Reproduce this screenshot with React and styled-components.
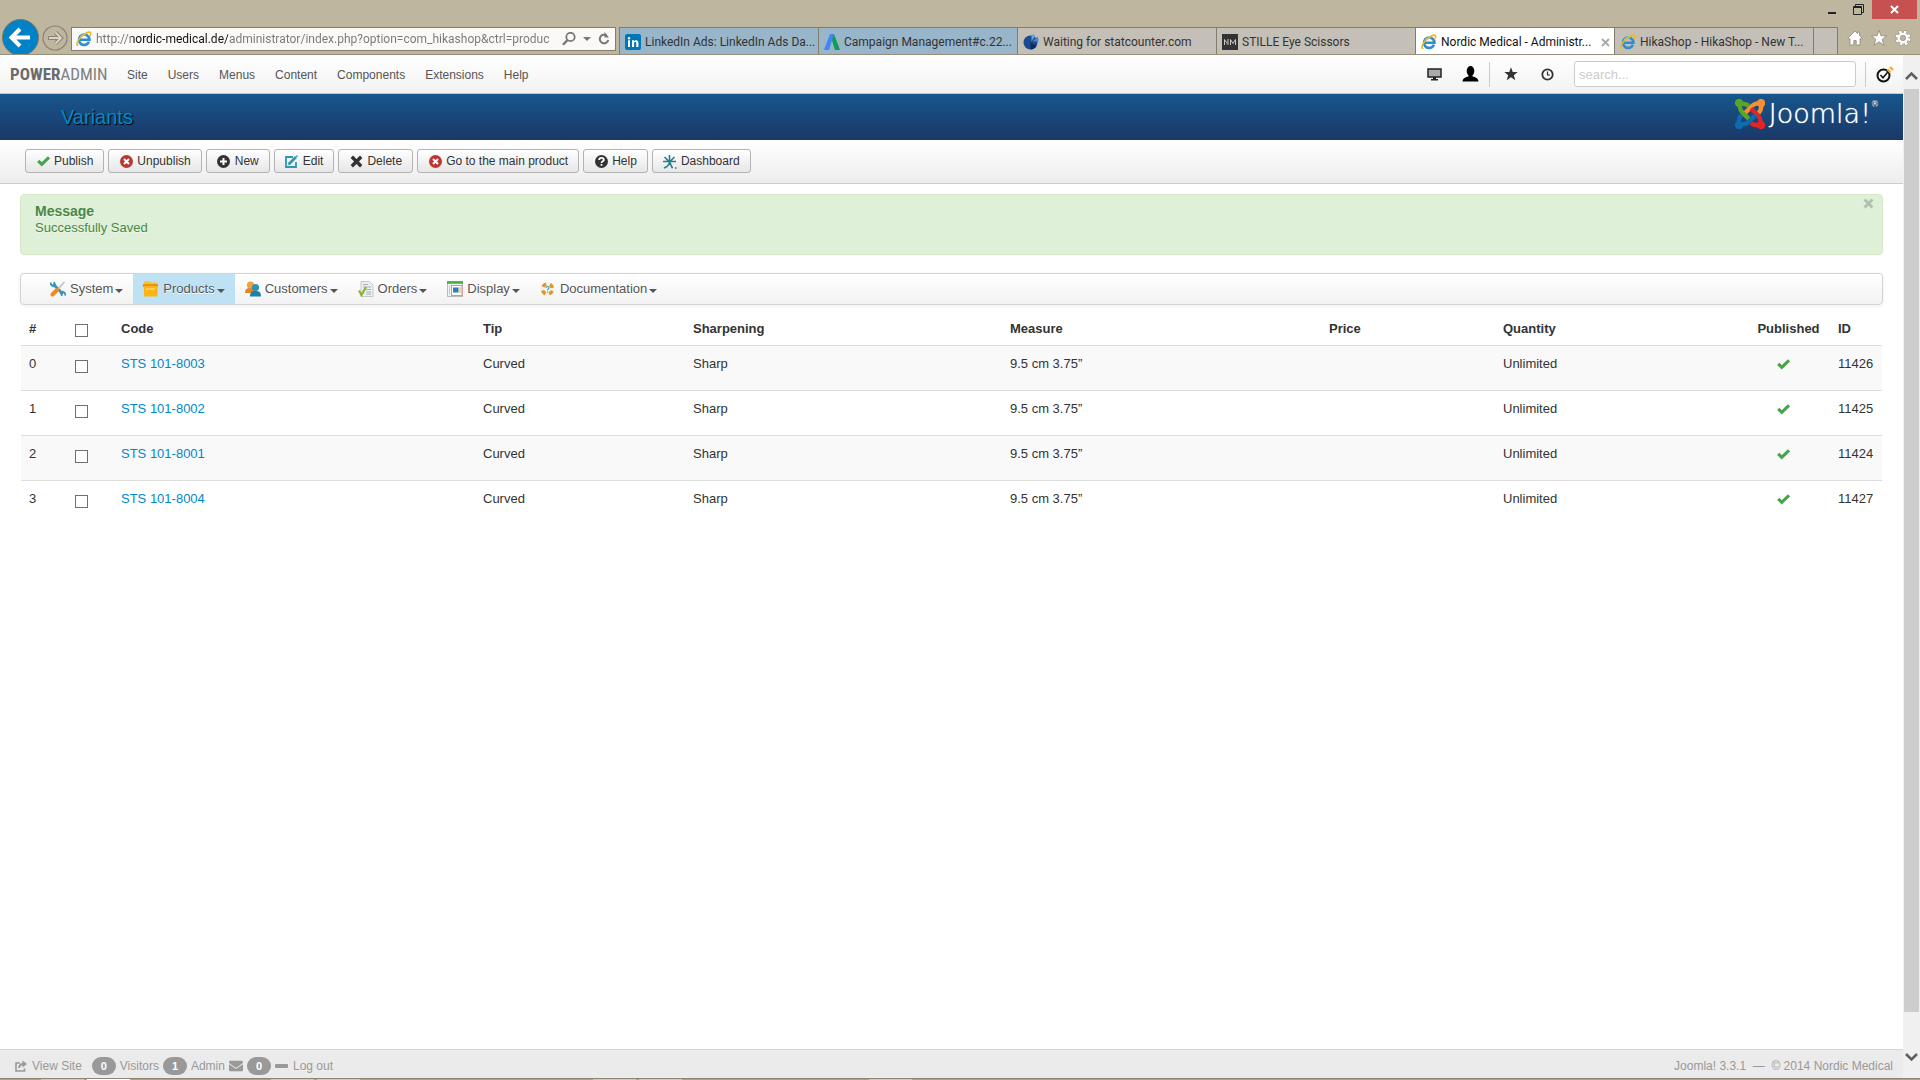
import { FaEnvelope } from "react-icons/fa";
import styled, { createGlobalStyle } from "styled-components";

const GlobalStyle = createGlobalStyle`
  * {
    box-sizing: border-box;
  }

  body {
    margin: 0;
    background: #ffffff;
    color: #333333;
    font-family: "Liberation Sans", Arial, sans-serif;
    font-size: 13px;
    line-height: 18px;
  }

  a {
    color: inherit;
    text-decoration: none;
  }

  button {
    font-family: inherit;
    cursor: pointer;
  }

  svg {
    display: block;
    flex: none;
  }
`

const Screen = styled.div`
  display: flex;
  flex-direction: column;
  min-height: 100vh;
`

/* ---------- browser window ---------- */

const Chrome = styled.header`
  background: #bfb6a0;
  border-bottom: 1px solid #988f7a;
  font-family: Roboto, "Open Sans", sans-serif;
  font-size: 12px;
`

const WindowControls = styled.div`
  display: flex;
  justify-content: flex-end;
  height: 19px;
  padding-right: 3px;
`

const WindowButton = styled.button`
  display: flex;
  align-items: center;
  justify-content: center;
  width: ${(p) => (p.$close ? "45px" : "27px")};
  padding: 0;
  border: 0;
  background: ${(p) => (p.$close ? "#c75050" : "transparent")};
`

const NavRow = styled.div`
  display: flex;
  align-items: flex-end;
  height: 35px;
  padding-left: 2px;
  overflow: hidden;
`

const BackButton = styled.button`
  align-self: flex-start;
  width: 37px;
  height: 37px;
  padding: 0;
  border: 0;
  background: transparent;
`

const ForwardButton = styled.button`
  width: 26px;
  height: 26px;
  margin: 0 3px 3px;
  padding: 0;
  border: 0;
  background: transparent;
`

const AddressBar = styled.label`
  display: flex;
  align-items: center;
  gap: 4px;
  flex: 0 1 545px;
  height: 24px;
  margin-bottom: 3px;
  padding: 0 5px 0 4px;
  border: 1px solid #857d6b;
  background: #faf9f7;
`

/* the host part of the address is darker than the rest */
const AddressInput = styled.input`
  flex: 1;
  min-width: 0;
  height: 20px;
  padding: 0;
  border: 0;
  outline: 0;
  font: inherit;
  color: transparent;
  background: linear-gradient(90deg, #777777 35px, #111111 35px, #111111 132px, #777777 132px);
  background-clip: text;
`

const TabStrip = styled.nav`
  display: flex;
  flex: 1;
  min-width: 0;
  height: 27px;
  margin-left: 3px;
  border-left: 1px solid #857d6b;
`

const tabColors = {
  blue: "#98b5c9",
  plain: "#c4c0b8",
  active: "#ffffff",
}

const Tab = styled.a`
  display: flex;
  align-items: center;
  flex: 0 1 199px;
  min-width: 0;
  gap: 4px;
  padding: 2px 4px 0 5px;
  border-top: 1px solid #857d6b;
  border-right: 1px solid #857d6b;
  background: ${(p) => tabColors[p.$kind]};
  color: ${(p) => (p.$kind === "active" ? "#111111" : "#333333")};
`

const TabTitle = styled.span`
  flex: 1;
  min-width: 0;
  white-space: nowrap;
`

const NewTab = styled.button`
  width: 24px;
  padding: 0;
  border: solid #857d6b;
  border-width: 1px 1px 0 0;
  background: ${tabColors.plain};
`

const BrowserTools = styled.div`
  display: flex;
  align-items: center;
  gap: 8px;
  height: 33px;
  padding: 0 9px 0 8px;
`

const ToolButton = styled.button`
  padding: 0;
  border: 0;
  background: transparent;
`

const Viewport = styled.div`
  display: flex;
  flex: 1;
`

const Page = styled.div`
  display: flex;
  flex-direction: column;
  flex: 1;
  min-width: 0;
`

const ScrollTrack = styled.div`
  display: flex;
  flex-direction: column;
  width: 17px;
  background: #f0f0f0;
`

const ScrollArrow = styled.button`
  display: flex;
  justify-content: center;
  align-items: flex-end;
  height: ${(p) => (p.$down ? "66px" : "34px")};
  padding: ${(p) => (p.$down ? "0 0 16px" : "0 0 8px")};
  border: 0;
  background: transparent;
`

const ScrollThumb = styled.div`
  flex: 1;
  margin: 0 1px;
  background: #cdcdcd;
`

/* ---------- admin header ---------- */

const TopBar = styled.div`
  display: flex;
  align-items: center;
  height: 39px;
  padding-left: 10px;
  border-bottom: 1px solid #c8c8c8;
  background: linear-gradient(#ffffff, #f2f2f2);
  font-size: 12px;
`

const Brand = styled.a`
  width: 97px;
  margin-right: 10px;
  color: #808080;
  font-family: "Liberation Sans Narrow", "Roboto Condensed", "Liberation Sans", sans-serif;
  font-size: 17px;

  strong {
    color: #6b6b6b;
  }
`

const TopMenu = styled.nav`
  display: flex;
  flex: 1;

  a {
    padding: 1px 10px 0;
    color: #555555;
  }
`

const TopActions = styled.div`
  display: flex;
  align-items: center;
`

const IconLink = styled.a`
  display: flex;
  align-items: center;
  justify-content: center;
  width: 36px;
  height: 26px;
`

const Separator = styled.span`
  width: 1px;
  height: 25px;
  margin: ${(p) => (p.$tight ? "0 3px 0 1px" : "0 1px 0 9px")};
  background: #cccccc;
`

const SearchInput = styled.input`
  width: 282px;
  height: 26px;
  margin-left: 9px;
  padding: 0 4px;
  border: 1px solid #cccccc;
  border-radius: 3px;
  font: inherit;
  font-size: 13px;
  outline: 0;

  &::placeholder {
    color: #cccccc;
  }
`

const Banner = styled.div`
  display: flex;
  align-items: center;
  justify-content: space-between;
  height: 46px;
  padding: 0 24px 0 61px;
  background: linear-gradient(#17568c, #1a3867);
`

const PageTitle = styled.h1`
  margin: 0;
  color: #0088cc;
  font-size: 20px;
  font-weight: normal;
  text-shadow: 1px 1px 1px #000000;
`

const Logo = styled.a`
  display: flex;
  align-items: center;
  gap: 4px;
  height: 46px;
  padding-bottom: 6px;
  color: #ffffff;
  font-family: "DejaVu Sans", sans-serif;
  font-size: 27px;
  font-weight: 200;
  text-shadow: 0 0 1px #ffffff;

  sup {
    align-self: flex-start;
    font-size: 8px;
    line-height: 22px;
    margin-left: -4px;
  }
`

const Toolbar = styled.div`
  display: flex;
  align-items: flex-start;
  gap: 4px;
  height: 44px;
  padding: 9px 25px 0;
  border-bottom: 1px solid #cccccc;
  background: linear-gradient(#ffffff, #ededed);
`

const ToolbarButton = styled.button`
  display: flex;
  align-items: center;
  gap: 4px;
  height: 24px;
  padding: 0 10px;
  border: 1px solid #b3b3b3;
  border-radius: 3px;
  background: linear-gradient(#ffffff, #e6e6e6);
  color: #333333;
  font-size: 12px;
  white-space: nowrap;
`

const ButtonIcon = styled.span`
  display: flex;
  justify-content: center;
  width: 14px;
  color: ${(p) => p.$color};
`

/* ---------- content ---------- */

const Content = styled.main`
  flex: 1;
  padding: 10px 20px;
`

const Alert = styled.section`
  display: flex;
  justify-content: space-between;
  align-items: flex-start;
  margin-bottom: 18px;
  padding: 8px 8px 17px 14px;
  border: 1px solid #d6e9c6;
  border-radius: 4px;
  background: #dff0d8;
  color: #468847;
  text-shadow: 0 1px 0 rgba(255, 255, 255, 0.5);

  h4 {
    margin: 0;
    font-size: 14px;
    line-height: 16px;
  }

  p {
    margin: 0;
  }
`

const AlertClose = styled.button`
  margin-top: -5px;
  padding: 0;
  border: 0;
  background: transparent;
  color: #b2c0ad;
`

const ShopMenu = styled.nav`
  display: flex;
  height: 32px;
  margin-bottom: 6px;
  padding: 0 19px;
  border: 1px solid #d4d4d4;
  border-radius: 4px;
  background: linear-gradient(#ffffff, #f2f2f2);
  box-shadow: 0 1px 4px rgba(0, 0, 0, 0.07);
`

const ShopMenuItem = styled.a`
  display: flex;
  align-items: center;
  gap: 4px;
  padding: 0 10px;
  background: ${(p) => (p.$active ? "#bfe1f4" : "transparent")};
  color: #555555;
  text-shadow: 0 1px 0 #ffffff;
`

const Caret = styled.span`
  margin: 3px 0 0 -2px;
  border: 4px solid transparent;
  border-top-color: #555555;
  border-bottom-width: 0;
`

const Check = styled.input`
  display: block;
  appearance: none;
  width: 13px;
  height: 13px;
  margin: 5px 0 0;
  border: 1px solid #707070;
  background: #ffffff;

  &:checked {
    background: #0088cc;
  }
`

const VariantTable = styled.table`
  width: calc(100% - 2px);
  margin-left: 1px;
  border-collapse: collapse;
  table-layout: fixed;

  th,
  td {
    padding: 9px 8px 7px;
    text-align: left;
    vertical-align: top;
  }

  th {
    height: 34px;
  }

  th ${Check} {
    margin-top: 4px;
  }

  td {
    height: 45px;
    border-top: 1px solid #dddddd;
  }

  th:nth-child(9) {
    text-align: center;
  }

  tbody tr:nth-child(odd) {
    background: #f9f9f9;
  }

  td a {
    color: #0088cc;
  }
`

const Col = styled.col`
  width: ${(p) => p.$width}px;
`

const PublishedMark = styled.button`
  display: block;
  margin: 3px auto 0;
  padding: 0 10px 0 0;
  border: 0;
  background: transparent;
  color: #46a546;
`

/* ---------- status bar ---------- */

const StatusBar = styled.footer`
  display: flex;
  justify-content: space-between;
  align-items: center;
  height: 29px;
  padding: 4px 10px 0 15px;
  border-top: 1px solid #d4d4d4;
  background: #ebebeb;
  color: #999999;
  font-size: 12px;
`

const StatusGroup = styled.div`
  display: flex;
  align-items: center;
  gap: 4px;

  a {
    display: flex;
    align-items: center;
    gap: 5px;
  }

  a:first-child {
    margin-right: 6px;
  }
`

const Badge = styled.span`
  width: 24px;
  border-radius: 9px;
  background: #999999;
  color: #ffffff;
  font-size: 11px;
  font-weight: bold;
  text-align: center;
`

const Taskbar = styled.div`
  display: flex;
  gap: 3px;
  height: 2px;
  padding-left: 41px;
  border-top: 1px solid #8d8674;
  background: #a9a28d;
`

const TaskButton = styled.span`
  width: 43px;
  margin-right: ${(p) => p.$space || 0}px;
  background: ${(p) => (p.$active ? "#ffffff" : "#cfcabd")};
`

/* ---------- drawings ---------- */

const IeIcon = () => (
  <svg width="16" height="16" viewBox="0 0 16 16" fill="none">
    <path d="M13 10.8A5.2 5.2 0 1 1 13.4 8.7H4" stroke="#2d8fd0" strokeWidth="2.6" />
    <path d="M4 6.6a4.6 4.6 0 0 1 6-2.6" stroke="#8fd3f5" strokeWidth="1.2" />
    <path
      d="M2.3 13.9C.6 15.3.2 12.6 2.6 8.9 5.4 4.6 11.6.2 14 1.3c1.1.5.8 2-.1 3.6"
      stroke="#f0b71e"
      strokeWidth="1.6"
    />
  </svg>
)

const LinkedInIcon = () => (
  <svg width="16" height="16" viewBox="0 0 16 16">
    <rect width="16" height="16" rx="2" fill="#0077b5" />
    <path d="M3 6.3h2V13H3zM7 6.3h2v1c.8-1.6 4.4-1.7 4.4 1.4V13h-2.1V9.3c0-1.9-2.2-1.7-2.2 0V13H7z" fill="#ffffff" />
    <circle cx="4" cy="4.2" r="1.2" fill="#ffffff" />
  </svg>
)

const AdwordsIcon = () => (
  <svg width="16" height="16" viewBox="0 0 16 16">
    <path d="M6 0h4l6 16h-5z" fill="#0f9d58" />
    <path d="M6 0h4L5 16H0z" fill="#4285f4" />
  </svg>
)

const StatIcon = () => (
  <svg width="16" height="16" viewBox="0 0 16 16">
    <circle cx="7.5" cy="8.5" r="7" fill="#1b4a92" />
    <path d="M7.5 8.5L13.5 12A7 7 0 0 1 7.5 15.5z" fill="#0f2c5e" />
    <path d="M8.5 7.5V.5a6 6 0 0 1 4 1z" fill="#6f9fd6" />
    <path d="M9.5 7.5l5-5a7 7 0 0 1 1 5z" fill="#4d86cb" />
  </svg>
)

const NmIcon = () => (
  <svg width="16" height="16" viewBox="0 0 16 16">
    <rect width="16" height="16" fill="#333333" />
    <path d="M2.5 11V5.5l3.5 5V5M8.5 11V5.5l2.5 4 2.5-4V11" fill="none" stroke="#c8c8c8" />
  </svg>
)

const BackIcon = () => (
  <svg width="37" height="37" viewBox="0 0 37 37" fill="none">
    <circle cx="18.5" cy="18.5" r="18" fill="#0083c6" stroke="#7d7666" />
    <path d="M28 18.5H10M18 10l-8.5 8.5L18 27" stroke="#ffffff" strokeWidth="4" />
  </svg>
)

const ForwardIcon = () => (
  <svg width="26" height="26" viewBox="0 0 26 26" fill="none">
    <circle cx="13" cy="13" r="12" stroke="#8b8371" strokeWidth="1.2" />
    <path d="M6 13h12M13.5 7.5L19 13l-5.5 5.5" stroke="#8b8371" strokeWidth="4" />
    <path d="M7 13h11M13.5 7.5L19 13l-5.5 5.5" stroke="#d8d3c5" strokeWidth="2" />
  </svg>
)

const FindIcon = () => (
  <svg width="14" height="14" viewBox="0 0 14 14" fill="none" stroke="#777777">
    <circle cx="8.5" cy="5" r="4.2" strokeWidth="1.8" />
    <path d="M5.5 8L1 12.8" strokeWidth="2.4" />
  </svg>
)

const RefreshIcon = () => (
  <svg width="12" height="14" viewBox="0 0 12 14">
    <path d="M8.5 3.4A4.3 4.3 0 1 0 10.3 8" fill="none" stroke="#777777" strokeWidth="2" />
    <path d="M6.5 0v5.5H11z" fill="#777777" />
  </svg>
)

const HomeIcon = () => (
  <svg width="16" height="16" viewBox="0 0 16 16">
    <path
      d="M8 1L.8 8.2l1.2 1L3 8.4V15h3.8v-4.5h2.4V15H13V8.4l1 .8 1.2-1L12.5 5.5V2h-2v1.5z"
      fill="#ffffff"
      stroke="#857d6b"
      strokeWidth=".7"
    />
  </svg>
)

const StarIcon = ({ size = 16, fill = "#333333", stroke = "none" }) => (
  <svg width={size} height={size} viewBox="0 0 16 16">
    <path
      d="M8 .4l2 5.4h5.7l-4.5 3.5 1.7 5.9L8 11.8l-4.9 3.4 1.7-5.9L.3 5.8H6z"
      fill={fill}
      stroke={stroke}
      strokeWidth=".7"
    />
  </svg>
)

const GearIcon = () => (
  <svg width="16" height="16" viewBox="0 0 16 16" fill="none">
    <circle cx="8" cy="8" r="6" stroke="#857d6b" strokeWidth="4" strokeDasharray="2.9 1.812" />
    <circle cx="8" cy="8" r="6" stroke="#ffffff" strokeWidth="3.2" strokeDasharray="2.4 2.312" strokeDashoffset="-.25" />
    <circle cx="8" cy="8" r="4" stroke="#ffffff" strokeWidth="2.6" />
    <circle cx="8" cy="8" r="2.6" stroke="#857d6b" strokeWidth=".6" />
  </svg>
)

const ChevronIcon = ({ down }) => (
  <svg width="13" height="10" viewBox="0 0 13 10" fill="none" stroke="#606060" strokeWidth="2.6">
    <path d={down ? "M1 2l5.5 5.5L12 2" : "M1 8l5.5-5.5L12 8"} />
  </svg>
)

const MonitorIcon = () => (
  <svg width="15" height="13" viewBox="0 0 15 13">
    <rect x="1" y="1" width="13" height="8" fill="#aaaaaa" stroke="#222222" strokeWidth="1.5" />
    <path d="M6 9h3v2h2v1.5H4V11h2z" fill="#222222" />
  </svg>
)

const UserIcon = () => (
  <svg width="17" height="16" viewBox="0 0 17 16">
    <ellipse cx="8.5" cy="5" rx="3.8" ry="5" fill="#000000" />
    <path d="M6.5 8h4v2.5c3 .6 5.5 1.5 6 5H.5c.5-3.5 3-4.4 6-5z" fill="#000000" />
  </svg>
)

const ClockIcon = () => (
  <svg width="13" height="13" viewBox="0 0 13 13" fill="none" stroke="#333333">
    <circle cx="6.5" cy="6.5" r="5.2" strokeWidth="1.8" />
    <path d="M6.5 3.5V7h2.5" strokeWidth="1.2" />
  </svg>
)

const TuneIcon = () => (
  <svg width="18" height="17" viewBox="0 0 18 17" fill="none">
    <circle cx="7.5" cy="9.5" r="6" stroke="#111111" strokeWidth="2" />
    <path d="M4.5 9l2.5 2.8 5-6" stroke="#111111" strokeWidth="1.5" />
    <path d="M11.5 3.5l3 3M14 1l3 3" stroke="#f7a823" strokeWidth="2.2" />
  </svg>
)

const JoomlaMark = () => (
  <svg width="30" height="30" viewBox="0 0 30 30" fill="none" strokeWidth="4.4">
    <g stroke="#5ba525">
      <circle cx="4" cy="4" r="1.9" fill="#5ba525" />
      <path d="M4.5 4.5C5 11 6 12 8 14l6.5 6.5M5 5c3-.5 6-.5 9 2" />
    </g>
    <g stroke="#f9902f">
      <circle cx="26" cy="4" r="1.9" fill="#f9902f" />
      <path d="M26 5c.5 3 .5 6-2.5 9M25 4.5C20 4 18.5 5.5 16 8l-6.5 6.5" />
    </g>
    <g stroke="#e32526">
      <circle cx="26" cy="26" r="1.9" fill="#e32526" />
      <path d="M25 26c-3 .5-6 .5-9-2M25.5 25c.5-4-.5-6.5-3-9L16 9.5" />
    </g>
    <g stroke="#0d6bb0">
      <circle cx="4" cy="26" r="1.9" fill="#0d6bb0" />
      <path d="M4 25c-.5-3-.5-6 2.5-9M5 25.5c4 .5 6.5-.5 9-3l6.5-6.5" />
    </g>
    <path d="M8 14l4 4" stroke="#5ba525" />
  </svg>
)

const CheckIcon = () => (
  <svg width="13" height="12" viewBox="0 0 13 12" fill="none">
    <path d="M1.2 5.8l3.6 3.6L12 2.3" stroke="currentColor" strokeWidth="3.1" />
  </svg>
)

const CrossIcon = ({ size = 13 }) => (
  <svg width={size} height={size} viewBox="0 0 13 13" fill="none">
    <path d="M1.8 1.8l9.4 9.4M11.2 1.8l-9.4 9.4" stroke="currentColor" strokeWidth="3.4" />
  </svg>
)

const CancelIcon = () => (
  <svg width="13" height="13" viewBox="0 0 13 13" fill="none">
    <circle cx="6.5" cy="6.5" r="6.5" fill="currentColor" />
    <path d="M4 4l5 5M9 4L4 9" stroke="#ffffff" strokeWidth="2" />
  </svg>
)

const PlusIcon = () => (
  <svg width="13" height="13" viewBox="0 0 13 13" fill="none">
    <circle cx="6.5" cy="6.5" r="6.5" fill="currentColor" />
    <path d="M6.5 3v7M3 6.5h7" stroke="#ffffff" strokeWidth="2" />
  </svg>
)

const QuestionIcon = () => (
  <svg width="13" height="13" viewBox="0 0 13 13" fill="none">
    <circle cx="6.5" cy="6.5" r="6.5" fill="currentColor" />
    <path d="M4.2 4.9c0-2.6 4.6-2.6 4.6 0C8.8 6.4 6.5 6.3 6.5 8M6.5 9v1.8" stroke="#ffffff" strokeWidth="1.8" />
  </svg>
)

const EditIcon = () => (
  <svg width="13" height="13" viewBox="0 0 13 13" fill="none" stroke="currentColor">
    <path d="M8 2H1v10h10V7" strokeWidth="1.8" />
    <path d="M4.5 8.5L11 2" strokeWidth="2.6" />
    <path d="M3.5 9.5l.5-2 1.5 1.5z" fill="currentColor" />
    <path d="M11.3.6l1.2 1.2" strokeWidth="1.5" />
  </svg>
)

const DashboardIcon = () => (
  <svg width="14" height="15" viewBox="0 0 14 15" fill="none" stroke="currentColor" strokeWidth="1.6">
    <path d="M6.5 1v7M0 7.5h13M1.5 3l4 4M11.5 3l-4 4M6.5 7.5c0 3-1.5 5-5.5 6.5M6.5 7.5L9 13.5h1M12 14h1.5" />
  </svg>
)

const SystemIcon = () => (
  <svg width="16" height="16" viewBox="0 0 16 16" fill="none">
    <path d="M3 3l10 10" stroke="#3b94b8" strokeWidth="2.6" />
    <path d="M1 1.5a2.8 2.8 0 0 0 4.5 3L4 1M15 14.5a2.8 2.8 0 0 0-4.5-3L12 15" stroke="#3b94b8" strokeWidth="1.7" />
    <path d="M14.5 1L8 8" stroke="#b9c3c9" strokeWidth="1.8" />
    <path d="M7 9l-4.5 4.5" stroke="#ef8a26" strokeWidth="4" strokeLinecap="round" />
  </svg>
)

const ProductsIcon = () => (
  <svg width="16" height="16" viewBox="0 0 16 16">
    <path d="M1 .5h6l1 1h6V6H1z" fill="#f6bf3c" />
    <rect y="3" width="15" height="3" fill="#e9960f" />
    <rect x="1" y="5" width="13.5" height="10.5" fill="#fdb515" />
    <path d="M3 8h9" stroke="#ffd766" strokeWidth="1.5" />
  </svg>
)

const CustomersIcon = () => (
  <svg width="16" height="16" viewBox="0 0 16 16">
    <circle cx="5.5" cy="4" r="3.6" fill="#f2a13a" />
    <path d="M0 12c0-4 2-5 5.5-5S10 9 10 12z" fill="#e8832a" />
    <circle cx="10.5" cy="6.5" r="3.6" fill="#2a93b8" />
    <path d="M5 15.5c0-4.5 2-5.5 5.5-5.5s5.5 1 5.5 5.5z" fill="#1f7fa6" />
  </svg>
)

const OrdersIcon = () => (
  <svg width="16" height="16" viewBox="0 0 16 16" fill="none">
    <path d="M3 .5h8.5l3.5 3.5v11.5H3z" fill="#eceff1" stroke="#c3c8cc" />
    <path d="M5 3.5h5M5 6h8M8 8.5h5M8 11h5M8 13h5" stroke="#a9b1b7" />
    <path d="M1 9.5L3.5 14 8 6" stroke="#8db52c" strokeWidth="2.2" />
  </svg>
)

const DisplayIcon = () => (
  <svg width="16" height="16" viewBox="0 0 16 16" fill="none">
    <rect x=".5" y=".5" width="15" height="15" fill="#f4f4f4" stroke="#b7bcc0" />
    <path d="M0 1.5h16" stroke="#46ae3c" strokeWidth="2.5" />
    <rect x="4.5" y="4.5" width="10.5" height="10" fill="#ffffff" stroke="#e58a8a" />
    <rect x="6" y="6.5" width="5.5" height="5" fill="#2a83ad" />
    <path d="M13 6v6" stroke="#f0a63a" />
    <path d="M2.5 4.5v9" stroke="#c5c9cc" />
  </svg>
)

const DocsIcon = () => (
  <svg width="16" height="16" viewBox="0 0 16 16" fill="none">
    <circle cx="7.5" cy="8" r="5" stroke="#f0f0f0" strokeWidth="3.5" />
    <circle cx="7.5" cy="8" r="5" stroke="#e2951d" strokeWidth="3.5" strokeDasharray="4 3.854" strokeDashoffset="-1.927" />
    <path d="M6 7c0-2 3-2 3 0 0 1-1.5 1-1.5 2.2M7.5 10.2v1.2" stroke="#3a9fc4" strokeWidth="1.2" />
  </svg>
)

const ShareIcon = () => (
  <svg width="12" height="12" viewBox="0 0 12 12" fill="none" stroke="#999999">
    <path d="M5 3H1v8h8.5V8.5" strokeWidth="1.6" />
    <path d="M4 8c.3-2.8 1.6-4 4.5-4" strokeWidth="2" />
    <path d="M7.5.5v7L12 4z" fill="#999999" stroke="none" />
  </svg>
)

/* ---------- data ---------- */

const tabs = [
  { title: "LinkedIn Ads: LinkedIn Ads Da...", icon: LinkedInIcon, kind: "blue" },
  { title: "Campaign Management#c.22...", icon: AdwordsIcon, kind: "blue" },
  { title: "Waiting for statcounter.com", icon: StatIcon, kind: "plain" },
  { title: "STILLE Eye Scissors", icon: NmIcon, kind: "plain" },
  { title: "Nordic Medical - Administr...", icon: IeIcon, kind: "active" },
  { title: "HikaShop - HikaShop - New T...", icon: IeIcon, kind: "plain" },
]

const topMenu = ["Site", "Users", "Menus", "Content", "Components", "Extensions", "Help"]

const toolbar = [
  { label: "Publish", icon: CheckIcon, color: "#46a546" },
  { label: "Unpublish", icon: CancelIcon, color: "#bd362f" },
  { label: "New", icon: PlusIcon, color: "#333333" },
  { label: "Edit", icon: EditIcon, color: "#2f96b4" },
  { label: "Delete", icon: CrossIcon, color: "#333333" },
  { label: "Go to the main product", icon: CancelIcon, color: "#bd362f" },
  { label: "Help", icon: QuestionIcon, color: "#333333" },
  { label: "Dashboard", icon: DashboardIcon, color: "#23808f" },
]

const shopMenu = [
  { label: "System", icon: SystemIcon },
  { label: "Products", icon: ProductsIcon, active: true },
  { label: "Customers", icon: CustomersIcon },
  { label: "Orders", icon: OrdersIcon },
  { label: "Display", icon: DisplayIcon },
  { label: "Documentation", icon: DocsIcon },
]

const columns = [46, 46, 362, 210, 317, 319, 174, 252, 83, 52]

const variants = [
  { code: "STS 101-8003", id: 11426 },
  { code: "STS 101-8002", id: 11425 },
  { code: "STS 101-8001", id: 11424 },
  { code: "STS 101-8004", id: 11427 },
]

const BrowserChrome = () => (
  <Chrome>
    <WindowControls>
      <WindowButton aria-label="Minimize">
        <svg width="10" height="10" viewBox="0 0 10 10">
          <path d="M1 7h8v2H1z" fill="#222222" />
        </svg>
      </WindowButton>
      <WindowButton aria-label="Restore">
        <svg width="11" height="11" viewBox="0 0 11 11" fill="none" stroke="#222222">
          <path d="M2.5 2V.5h8v8H9" />
          <path d="M.5 2.5h8v8h-8zM.5 3.5h8" />
        </svg>
      </WindowButton>
      <WindowButton $close aria-label="Close">
        <svg width="9" height="9" viewBox="0 0 9 9">
          <path d="M1 1l7 7M8 1L1 8" stroke="#ffffff" strokeWidth="2" />
        </svg>
      </WindowButton>
    </WindowControls>
    <NavRow>
      <BackButton aria-label="Back"><BackIcon /></BackButton>
      <ForwardButton aria-label="Forward"><ForwardIcon /></ForwardButton>
      <AddressBar>
        <IeIcon />
        <AddressInput
          aria-label="Address"
          defaultValue="http://nordic-medical.de/administrator/index.php?option=com_hikashop&ctrl=produc"
        />
        <FindIcon />
        <svg width="14" height="4" viewBox="0 0 14 4">
          <path d="M3 0h8L7 4z" fill="#777777" />
        </svg>
        <RefreshIcon />
      </AddressBar>
      <TabStrip>
        {tabs.map(({ title, icon: Icon, kind }) => (
          <Tab key={title} href="#" $kind={kind}>
            <Icon />
            <TabTitle>{title}</TabTitle>
            {kind === "active" && (
              <svg width="9" height="9" viewBox="0 0 9 9">
                <path d="M1 1l7 7M8 1L1 8" stroke="#aaaaaa" strokeWidth="2" />
              </svg>
            )}
          </Tab>
        ))}
        <NewTab aria-label="New tab" />
      </TabStrip>
      <BrowserTools>
        <ToolButton aria-label="Home"><HomeIcon /></ToolButton>
        <ToolButton aria-label="Favorites"><StarIcon fill="#ffffff" stroke="#857d6b" /></ToolButton>
        <ToolButton aria-label="Tools"><GearIcon /></ToolButton>
      </BrowserTools>
    </NavRow>
  </Chrome>
)

const AdminHeader = () => (
  <>
    <TopBar>
      <Brand href="#"><strong>POWER</strong>ADMIN</Brand>
      <TopMenu>
        {topMenu.map((item) => (
          <a key={item} href="#">{item}</a>
        ))}
      </TopMenu>
      <TopActions>
        <IconLink href="#" aria-label="Preview"><MonitorIcon /></IconLink>
        <IconLink href="#" aria-label="Profile"><UserIcon /></IconLink>
        <Separator $tight />
        <IconLink href="#" aria-label="Favourites"><StarIcon size={14} /></IconLink>
        <IconLink href="#" aria-label="History"><ClockIcon /></IconLink>
        <SearchInput type="search" aria-label="Search" placeholder="search..." />
        <Separator />
        <IconLink href="#" aria-label="Settings"><TuneIcon /></IconLink>
      </TopActions>
    </TopBar>
    <Banner>
      <PageTitle>Variants</PageTitle>
      <Logo href="#">
        <JoomlaMark />
        Joomla!
        <sup>®</sup>
      </Logo>
    </Banner>
    <Toolbar>
      {toolbar.map(({ label, icon: Icon, color }) => (
        <ToolbarButton key={label}>
          <ButtonIcon $color={color}><Icon /></ButtonIcon>
          {label}
        </ToolbarButton>
      ))}
    </Toolbar>
  </>
)

const Variants = () => (
  <VariantTable>
    <colgroup>
      {columns.map((width, i) => (
        <Col key={i} $width={width} />
      ))}
    </colgroup>
    <thead>
      <tr>
        <th>#</th>
        <th><Check type="checkbox" aria-label="Select all" /></th>
        <th>Code</th>
        <th>Tip</th>
        <th>Sharpening</th>
        <th>Measure</th>
        <th>Price</th>
        <th>Quantity</th>
        <th>Published</th>
        <th>ID</th>
      </tr>
    </thead>
    <tbody>
      {variants.map(({ code, id }, i) => (
        <tr key={id}>
          <td>{i}</td>
          <td><Check type="checkbox" aria-label={code} /></td>
          <td><a href="#">{code}</a></td>
          <td>Curved</td>
          <td>Sharp</td>
          <td>9.5 cm 3.75”</td>
          <td />
          <td>Unlimited</td>
          <td><PublishedMark aria-label="Published"><CheckIcon /></PublishedMark></td>
          <td>{id}</td>
        </tr>
      ))}
    </tbody>
  </VariantTable>
)

const Status = () => (
  <StatusBar>
    <StatusGroup>
      <a href="#"><ShareIcon /> View Site</a>
      <Badge>0</Badge>
      Visitors
      <Badge>1</Badge>
      Admin
      <FaEnvelope size={14} />
      <Badge>0</Badge>
      <a href="#">
        <svg width="13" height="4" viewBox="0 0 13 4">
          <rect width="13" height="4" rx="1" fill="#999999" />
        </svg>
        Log out
      </a>
    </StatusGroup>
    <span>Joomla! 3.3.1 &nbsp;—&nbsp; © 2014 Nordic Medical</span>
  </StatusBar>
)

const App = () => {
  return (
    <Screen>
      <GlobalStyle />
      <BrowserChrome />
      <Viewport>
        <Page>
          <AdminHeader />
          <Content>
            <Alert>
              <div>
                <h4>Message</h4>
                <p>Successfully Saved</p>
              </div>
              <AlertClose aria-label="Close message"><CrossIcon size={11} /></AlertClose>
            </Alert>
            <ShopMenu>
              {shopMenu.map(({ label, icon: Icon, active }) => (
                <ShopMenuItem key={label} href="#" $active={active}>
                  <Icon />
                  {label}
                  <Caret />
                </ShopMenuItem>
              ))}
            </ShopMenu>
            <Variants />
          </Content>
          <Status />
        </Page>
        <ScrollTrack>
          <ScrollArrow aria-label="Scroll up"><ChevronIcon /></ScrollArrow>
          <ScrollThumb />
          <ScrollArrow $down aria-label="Scroll down"><ChevronIcon down /></ScrollArrow>
        </ScrollTrack>
      </Viewport>
      <Taskbar>
        <TaskButton />
        <TaskButton $active $space={138} />
        <TaskButton />
        <TaskButton $space={230} />
        <TaskButton />
        <TaskButton $space={184} />
        <TaskButton />
      </Taskbar>
    </Screen>
  )
}

export default App;
